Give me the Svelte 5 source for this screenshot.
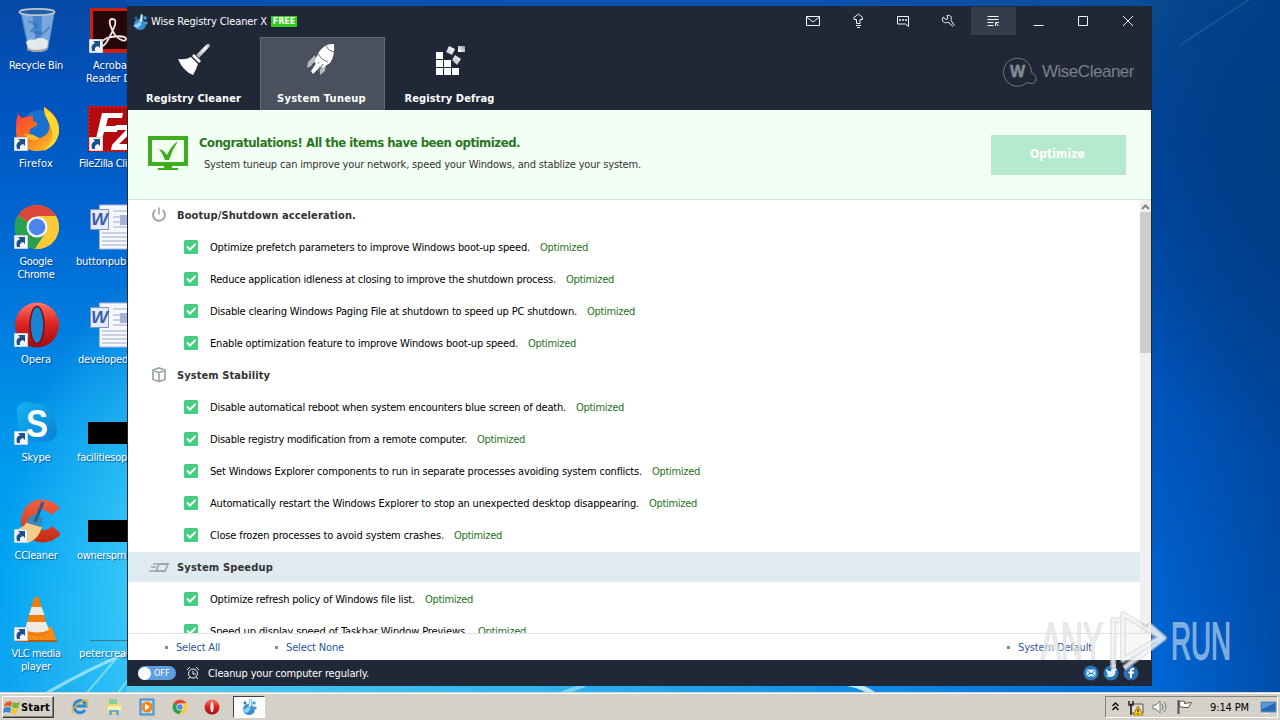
<script lang="ts">
  type Line = { text: string; width: number; indent?: number };
  type Shortcut = { icon: string; x: number; y: number; arrow: boolean; lines: Line[] };

  const shortcuts: Shortcut[] = [
    { icon: "bin", x: 0, y: 7, arrow: false, lines: [{ text: "Recycle Bin", width: 54 }] },
    { icon: "firefox", x: 0, y: 105, arrow: true, lines: [{ text: "Firefox", width: 34 }] },
    { icon: "chrome", x: 0, y: 203, arrow: true, lines: [{ text: "Google", width: 33 }, { text: "Chrome", width: 37 }] },
    { icon: "opera", x: 0, y: 301, arrow: true, lines: [{ text: "Opera", width: 30 }] },
    { icon: "skype", x: 0, y: 399, arrow: true, lines: [{ text: "Skype", width: 29 }] },
    { icon: "ccleaner", x: 0, y: 497, arrow: true, lines: [{ text: "CCleaner", width: 43 }] },
    { icon: "vlc", x: 0, y: 595, arrow: true, lines: [{ text: "VLC media", width: 49 }, { text: "player", width: 30 }] },
    { icon: "acrobat", x: 75, y: 7, arrow: true, lines: [{ text: "Acroba", width: 34, indent: 18 }, { text: "Reader D", width: 45, indent: 11 }] },
    { icon: "filezilla", x: 75, y: 105, arrow: true, lines: [{ text: "FileZilla Cli", width: 48, indent: 4 }] },
    { icon: "word", x: 75, y: 203, arrow: false, lines: [{ text: "buttonpub", width: 50, indent: 1 }] },
    { icon: "word", x: 75, y: 301, arrow: false, lines: [{ text: "developed", width: 50, indent: 3 }] },
    { icon: "black", x: 75, y: 399, arrow: false, lines: [{ text: "facilitiesop", width: 50, indent: 2 }] },
    { icon: "black", x: 75, y: 497, arrow: false, lines: [{ text: "ownerspm", width: 49, indent: 2 }] },
    { icon: "line", x: 75, y: 595, arrow: false, lines: [{ text: "petercrea", width: 47, indent: 4 }] },
  ];

  const tabs = [
    { name: "Registry Cleaner", icon: "broom", width: 95 },
    { name: "System Tuneup", icon: "rocket", width: 89 },
    { name: "Registry Defrag", icon: "blocks", width: 90 },
  ];
  let activeTab = $state("System Tuneup");

  const titleButtons = ["mail", "upgrade", "chat", "wrench", "menu", "minimize", "maximize", "close"];

  const sections = [
    {
      title: "Bootup/Shutdown acceleration.",
      width: 179,
      icon: "power",
      hover: false,
      items: [
        { text: "Optimize prefetch parameters to improve Windows boot-up speed.", width: 320 },
        { text: "Reduce application idleness at closing to improve the shutdown process.", width: 346 },
        { text: "Disable clearing Windows Paging File at shutdown to speed up PC shutdown.", width: 367 },
        { text: "Enable optimization feature to improve Windows boot-up speed.", width: 308 },
      ],
    },
    {
      title: "System Stability",
      width: 93,
      icon: "cube",
      hover: false,
      items: [
        { text: "Disable automatical reboot when system encounters blue screen of death.", width: 356 },
        { text: "Disable registry modification from a remote computer.", width: 257 },
        { text: "Set Windows Explorer components to run in separate processes avoiding system conflicts.", width: 432 },
        { text: "Automatically restart the Windows Explorer to stop an unexpected desktop disappearing.", width: 429 },
        { text: "Close frozen processes to avoid system crashes.", width: 234 },
      ],
    },
    {
      title: "System Speedup",
      width: 96,
      icon: "speed",
      hover: true,
      items: [
        { text: "Optimize refresh policy of Windows file list.", width: 205 },
        { text: "Speed up display speed of Taskbar Window Previews.", width: 258 },
      ],
    },
  ];

  // Spreads the letters so that a label takes exactly the given width
  function fit(node: HTMLElement, width: number) {
    const natural = node.getBoundingClientRect().width;
    const count = (node.textContent ?? "").length;
    node.style.letterSpacing = (width - natural) / count + "px";
  }
</script>

{#snippet chromeLogo()}
  <circle cx="24" cy="24" r="22" fill="#fbc833" />
  <path d="M24 24L4.9 13A22 22 0 0 1 43.1 13z" fill="#dc4638" />
  <path d="M4.9 13A22 22 0 0 0 22 46L33 29 24 24z" fill="#27a052" />
  <path d="M24 13H43A22 22 0 0 1 22 46L33 29z" fill="#fcca39" />
  <circle cx="24" cy="24" r="10.5" fill="#f4f4f4" />
  <circle cx="24" cy="24" r="8.3" fill="#4c86ec" />
{/snippet}

{#snippet operaLogo()}
  <ellipse cx="25" cy="24" rx="22" ry="22.5" fill="url(#operaRed)" />
  <ellipse cx="25" cy="24" rx="7" ry="18.5" fill="#1585d4" stroke="#7b0d0d" stroke-width="1.5" />
{/snippet}

{#snippet cleanerLogo()}
  <path d="M4 6c3-2 8-1 9 3 2 4-1 7-5 7-5 0-8-6-4-10z" fill="#398fce" />
  <path d="M9 0l2 1-1 7-3 1z" fill="#e7f5ff" stroke="#438fca" stroke-width=".6" />
  <path d="M1 12l6-4 3 2-4 4z" fill="#8fd2ff" />
  <circle cx="13" cy="4" r="1.800" fill="#47a8e4" />
  <circle cx="4" cy="4" r="1.400" fill="#2b77b7" />
  <circle cx="14" cy="9" r="1.700" fill="#4f9fd6" />
{/snippet}

{#snippet desktopIcon(name: string)}
  {#if name === "bin"}
    <path d="M8 4h35l-7 38c-2 4-18 4-20 0z" fill="#7ab0e5" fill-opacity=".55" />
    <path d="M10 7l7 34c2 3 5 4 8 4L20 7zM30 7l-1 37 7-3 6-34z" fill="#c8e2f7" fill-opacity=".4" />
    <path d="M14 35q4-4 8-2 7-5 14 1l-1 8c-4 4-16 4-19 0z" fill="#f1f0ee" fill-opacity=".92" />
    <path d="M16 14l9 4-6 6 11 3 8-7" fill="none" stroke="#225fa8" stroke-width="2" opacity=".45" />
    <ellipse cx="25" cy="5" rx="17.5" ry="3.2" fill="#1c5fae" stroke="#c0c7cb" stroke-width="1.8" />
    <path d="M15 42q10 4 20 0" fill="none" stroke="#9ba29e" stroke-width="2" />
  {:else if name === "firefox"}
    <circle cx="27" cy="22" r="17" fill="#1772cf" />
    <path d="M32 2c8 4 16 13 15 24-1 13-11 20-22 20C12 46 4 37 4 26c0-7 0-12 2-17l4 4c4-2 8-1 11-3v6c4 1 5 3 3 5l-6 3c-2 6 3 10 9 9 7-1 12-7 10-15-2-6-6-8-5-16z" fill="url(#fox)" />
    <path d="M32 2c7 5 15 12 15 23 0 10-7 18-16 21 8-6 11-14 8-23-2-7-7-12-7-21z" fill="#fed72f" />
    <path d="M12 28c4 3 8 0 11 3l4 2c-4 5-12 2-15-5z" fill="#ffbd28" />
  {:else if name === "chrome"}
    <g transform="translate(1 0)">{@render chromeLogo()}</g>
  {:else if name === "opera"}
    {@render operaLogo()}
  {:else if name === "skype"}
    <path d="M5 15C3 5 13 0 21 5c13-3 24 8 22 20 6 9-2 20-13 17C17 45 5 37 6 24z" fill="url(#skypeBlue)" />
    <text x="14" y="38" font-family="Liberation Sans, sans-serif" font-size="38" font-weight="bold" fill="#fff" textLength="22" lengthAdjust="spacingAndGlyphs">S</text>
  {:else if name === "ccleaner"}
    <path d="M48 11C38 0 22 0 14 10 5 22 9 37 20 43c10 5 22 2 29-6l-9-8c-5 6-14 5-17-1-3-7 0-14 7-15 4 0 7 2 9 5z" fill="url(#ccRed)" />
    <path d="M15 25l15 5c-3 10-9 15-16 16L3 33q8-2 12-8z" fill="#f7cb88" />
    <path d="M17 20q8-4 14 1l-2 9-14-4z" fill="#3987bd" />
    <path d="M31 5l-8 20" stroke="#225f8c" stroke-width="3" />
  {:else if name === "vlc"}
    <path d="M10 32h30l5 15H5z" fill="#f38b18" />
    <path d="M22 3q3-2 5 0l10 35q-13 6-25 0z" fill="#ef7c0b" />
    <path d="M19.500 12h10l3 8H17zM15 27h19l3 8q-12 5-24 0z" fill="#eee9e5" />
    <path d="M5 46h40" stroke="#b65e0e" stroke-width="2" />
  {:else if name === "acrobat"}
    <path fill="#ce1e12" d="M3 1h43v45H3z" />
    <path fill="#25070a" d="M6 4h40v38H6z" />
    <path d="M25 12c-5 0-1 10 3 16 5 6 11 7 11 4 0-4-13-3-19-1-6 3-8 7-6 8 4 2 11-13 14-21 1-5 0-6-3-6z" fill="none" stroke="#f5e9e8" stroke-width="1.8" />
  {:else if name === "filezilla"}
    <path fill="#b30b0d" d="M1 1h47v46H1z" />
    <path fill="none" stroke="#cf4145" stroke-dasharray="2 2" d="M2 2h46v44H2z" />
    <path d="M15 8h21l-1 5H21l-2 8h12l-1 6H17l-4 15H7zM29 20h19l-1 5-15 14h14v6H24l1-5 14-15H28z" fill="#fff" />
  {:else if name === "word"}
    <path fill="#f6f7fd" stroke="#a7b5db" d="M12.500 2h36v44h-36z" />
    <path d="M26 8h22M26 14h7M26 19h7M15 30h33M15 34h33M15 38h33M15 42h33M26 24h22" stroke="#9eabc8" stroke-width="1" />
    <path fill="#a3b3d6" d="M33 12h8v10h-8z" />
    <path fill="#e5ebf8" stroke="#8390c1" d="M3.500 6.500h18v20h-18z" />
    <text x="4" y="22" font-family="Liberation Sans, sans-serif" font-size="16" font-style="italic" font-weight="bold" fill="#365fb2" textLength="17" lengthAdjust="spacingAndGlyphs">W</text>
  {:else if name === "black"}
    <path fill="#000" d="M1 23h47v22H1z" />
  {:else}
    <path stroke="#397a94" d="M3 45.500h45" />
  {/if}
{/snippet}

{#snippet titleIcon(name: string)}
  {#if name === "mail"}
    <path d="M1.500 3.500h13v9h-13zM1.500 4l6.500 5 6.500-5" />
  {:else if name === "upgrade"}
    <path d="M6.500 10.500V6.500H4v-2l4.500-3.500 4 3.500v2h-2.500v4zM6 12.500h5M7 14.500h3" />
  {:else if name === "chat"}
    <path d="M2.500 3.500h11v10l-3-2.500h-8z" /><path d="M4 7h2M7 7h2M10 7h2" stroke-width="1.500" />
  {:else if name === "wrench"}
    <path d="M3 4l3 2.500 2-1-1-3c4-1 5 2 4 5l3.500 5M3 4c-2 5 2 7 5 5l5 4.500" />
  {:else if name === "menu"}
    <path d="M2.500 3.500h11M2.500 6.500h11M2.500 9.500h6M2.500 12.500h6M10.500 13V9.500H14M10.500 9.500l3 3.500" />
  {:else if name === "minimize"}
    <path d="M3.500 12.500h10" />
  {:else if name === "maximize"}
    <path d="M3.500 3.500h9v9h-9z" />
  {:else}
    <path d="M3 3l10 10M13 3L3 13" />
  {/if}
{/snippet}

{#snippet tabIcon(name: string)}
  {#if name === "broom"}
    <path d="M20 13L31 2q3-1 3 2L23 16z" fill="url(#handle)" />
    <path d="M18 12l7 7-2 2-7-7z" fill="#fff" />
    <path d="M15 15l7 7q-2 6-5 11Q7 29 2 17q8 1 13-2z" fill="#fff" />
  {:else if name === "rocket"}
    <path d="M11 13L4 20l-1 6 4-2 5-7zM22 23l-1 6-5 4v-5l3-7z" fill="#b6bbc1" />
    <path d="M30 2q-9-1-15 8l-5 10 8 6 8-5Q31 14 30 2z" fill="#fff" />
    <path d="M22 4q2 5 8 6M14 12q3 6 10 8M15 20l-7 10M19 22l-5 8" fill="none" stroke="#69717d" />
    <path d="M13 20l-6 9 2 3 7-7z" fill="#fff" />
  {:else}
    <path d="M4 10h7v7H4zM4 18h7v7H4zM4 26h7v7H4zM12 18h7v7h-7zM12 26h7v7h-7zM20 26h7v7h-7z" fill="#fff" />
    <path d="M17 4l6 3-3 6-6-3zM26 4h7v6h-7zM23 13l6 4-4 6-5-5z" fill="url(#handle)" />
  {/if}
{/snippet}

{#snippet sectionIcon(name: string)}
  {#if name === "power"}
    <path d="M5.500 4a6 6 0 1 0 7 0" stroke-width="2" /><path d="M9 1.500v7" stroke-width="1.600" />
  {:else if name === "cube"}
    <path d="M3 4l6-2 6 2v9.500l-6 2-6-2zM3 4.500l6 2 6-2M9 6.500v8" stroke-width="1.700" />
  {:else}
    <path d="M9 6h9l-3 7H6z" stroke-width="1.800" /><path d="M3 6h5M1 9h5M-1 13h6" stroke-width="1.500" />
  {/if}
{/snippet}

<svg class="defs" aria-hidden="true">
  <defs>
    <linearGradient id="operaRed" x2="0" y2="1"><stop stop-color="#ff7769" /><stop offset=".45" stop-color="#df2622" /><stop offset="1" stop-color="#9e0c10" /></linearGradient>
    <linearGradient id="fox" x2=".8" y2="1"><stop stop-color="#fa354a" /><stop offset=".5" stop-color="#fb6b1c" /><stop offset="1" stop-color="#ffc32a" /></linearGradient>
    <linearGradient id="skypeBlue" x2="1" y2="1"><stop stop-color="#13b4f2" /><stop offset="1" stop-color="#097fd2" /></linearGradient>
    <linearGradient id="ccRed" x2="0" y2="1"><stop stop-color="#f36040" /><stop offset="1" stop-color="#c52b18" /></linearGradient>
    <linearGradient id="handle" x1="1" y1="0" x2="0" y2="1"><stop stop-color="#888e99" /><stop offset=".3" stop-color="#fff" /><stop offset="1" stop-color="#949aa4" /></linearGradient>
  </defs>
</svg>

<div class="desktop">
  <svg class="rays" width="1280" height="692">
    <path d="M45 694Q90 668 130 652" stroke="#c8f6ff" stroke-width="3" opacity=".65" fill="none" />
    <path d="M85 695L115 660M117 694L130 677" stroke="#a8f2e5" stroke-width="2" opacity=".6" />
    <path d="M560 694l25-9" stroke="#a6e9ff" stroke-width="4" opacity=".6" />
    <path d="M845 683q18 3 30 12" stroke="#eaffff" stroke-width="5" fill="none" opacity=".8" />
    <path d="M1180 45L1250-1" stroke="#5ca6cf" stroke-width="2" opacity=".2" />
  </svg>

  {#each shortcuts as shortcut}
    <div class="shortcut" class:cut={shortcut.x > 0} style="left: {shortcut.x}px; top: {shortcut.y}px">
      <svg width="48" height="48">
        {@render desktopIcon(shortcut.icon)}
        {#if shortcut.arrow}
          <path d="M2.500 32.500h13v13h-13z" fill="#f5f6f7" stroke="#c2d3df" />
          <path d="M5 44q-2-6 3-8l-2-2h7v7l-2-2q-4 1-3 5z" fill="#1e508e" />
        {/if}
      </svg>
      {#each shortcut.lines as line}
        <div class="label" style="padding-left: {line.indent ?? 0}px"><span use:fit={line.width}>{line.text}</span></div>
      {/each}
    </div>
  {/each}

  <div class="window">
    <header class="titlebar">
      <svg class="app-icon" width="16" height="16">{@render cleanerLogo()}</svg>
      <span class="app-name" use:fit={116}>Wise Registry Cleaner X</span>
      <span class="badge">FREE</span>
      <div class="title-buttons">
        {#each titleButtons as name}
          <button class:pressed={name === "menu"} aria-label={name}>
            <svg width="16" height="16" class="stroke">{@render titleIcon(name)}</svg>
          </button>
        {/each}
      </div>
    </header>

    <nav>
      {#each tabs as tab}
        <button class="tab" class:active={activeTab === tab.name} onclick={() => (activeTab = tab.name)}>
          <svg width="36" height="36">{@render tabIcon(tab.icon)}</svg>
          <span use:fit={tab.width}>{tab.name}</span>
        </button>
      {/each}
      <div class="brand">
        <svg width="36" height="32">
          <path d="M29.500 16.500A14 14 0 1 0 25 26.500q7 3 9-2 1-5-4.500-8" fill="none" stroke="#747985" />
          <text x="8" y="21" font-family="Liberation Sans, sans-serif" font-size="16" font-weight="bold" fill="#858a94" stroke="#858a94" stroke-width=".5">W</text>
        </svg>
        <span use:fit={92}>WiseCleaner</span>
      </div>
    </nav>

    <section class="banner">
      <svg width="40" height="38">
        <path d="M2 3h36v26H2z" fill="#f2fff0" stroke="#3fae1c" stroke-width="4" />
        <path d="M16 30h8v3h6v2H10v-2h6z" fill="#3fae1c" />
        <path d="M11 14q5 1 8 6 4-9 11-14-6 9-9 19h-4q-2-6-6-11z" fill="#3fae1c" />
      </svg>
      <div class="message">
        <h1><span use:fit={321}>Congratulations! All the items have been optimized.</span></h1>
        <p><span use:fit={437}>System tuneup can improve your network, speed your Windows, and stablize your system.</span></p>
      </div>
      <button class="optimize"><span use:fit={55}>Optimize</span></button>
    </section>

    <div class="content">
      <div class="list">
        {#each sections as section}
          <div class="row heading" class:hover={section.hover}>
            <svg width="18" height="18">{@render sectionIcon(section.icon)}</svg>
            <span use:fit={section.width}>{section.title}</span>
          </div>
          {#each section.items as item}
            <div class="row item">
              <svg width="14" height="14">
                <rect width="14" height="14" rx="1.500" fill="#43cd80" />
                <path d="M3 6.500l3 3 5.500-5.500" fill="none" stroke="#fff" stroke-width="2" />
              </svg>
              <span class="text" use:fit={item.width}>{item.text}</span>
              <span class="status" use:fit={48}>Optimized</span>
            </div>
          {/each}
        {/each}
      </div>
      <div class="scrollbar">
        <svg width="11" height="12"><path d="M2 9l3.500-3.500L9 9" /></svg>
        <div class="thumb"></div>
        <svg class="down" width="11" height="12"><path d="M2 3l3.500 3.500L9 3" /></svg>
      </div>
    </div>

    <div class="links">
      <a href="#all"><span use:fit={44}>Select All</span></a>
      <a href="#none"><span use:fit={58}>Select None</span></a>
      <a class="last" href="#default"><span use:fit={74}>System Default</span></a>
    </div>

    <footer>
      <div class="toggle"><i></i><span>OFF</span></div>
      <svg class="stroke alarm" width="14" height="14">
        <circle cx="7" cy="7.500" r="4.500" /><path d="M7 5v3h3M1 4l3-3M13 4l-3-3M4 11l-2 2M10 11l2 2" />
      </svg>
      <span class="hint" use:fit={161}>Cleanup your computer regularly.</span>
      <div class="social">
        <svg width="16" height="16"><circle cx="8" cy="8" r="7.500" fill="#2877b9" /><path d="M3.500 4.500h9v7h-9z" fill="#d7effb" /><path d="M3.500 5L8 9l4.500-4M3.500 11.500L7 8M12.500 11.500L9 8" fill="none" stroke="#2877b9" /></svg>
        <svg width="16" height="16"><circle cx="8" cy="8" r="7.500" fill="#2877b9" /><path d="M3 4q3 3 5 2 0-3 3-3l3 1-1.500 2q0 6-6 6l-4-1 3-1-2-2 1-.5L3 6z" fill="#e4f6ff" /></svg>
        <svg width="16" height="16"><circle cx="8" cy="8" r="7.500" fill="#2b6fae" /><path d="M8 13V5.500Q8 3.500 11 4M5.500 7.500H11" fill="none" stroke="#fff" stroke-width="2" /></svg>
      </div>
    </footer>
  </div>

  <svg class="watermark" width="200" height="70">
    <g font-family="Liberation Sans Narrow, Liberation Sans, sans-serif" font-size="51">
      <text x="5" y="53" textLength="62" lengthAdjust="spacingAndGlyphs" fill="#e4e4e4" fill-opacity=".6" stroke="#dcdcdc" stroke-opacity=".6" stroke-width="2">ANY</text>
      <text x="135" y="53" textLength="60" lengthAdjust="spacingAndGlyphs" fill="#8fb8e4" fill-opacity=".85" stroke="#8fb8e4" stroke-opacity=".85" stroke-width="1.800">RUN</text>
    </g>
    <g fill="none" stroke="#d0d4d8" stroke-opacity=".6" stroke-width="6" stroke-linejoin="round">
      <path d="M80 60h-3V14h7M87 50V8l38 23-38 23zM112 18l16 14-40 30" fill="#e6e6e6" fill-opacity=".3" />
      <path d="M80 60h-3V14h7M87 50V8l38 23-38 23zM112 18l16 14-40 30" stroke="#fff" stroke-opacity=".6" stroke-width="3" />
    </g>
  </svg>

  <div class="taskbar">
    <button class="start">
      <svg width="18" height="18">
        <path d="M2 5q4-3 7-1L8 9Q5 7 1 9z" fill="#e75b26" /><path d="M10 4q4 2 7 0l-2 6q-3 1-6-1z" fill="#74b72b" />
        <path d="M1 10q4-2 7 0l-1 5q-3-2-7 0z" fill="#3b86cf" /><path d="M9 10q3 2 6 1l-2 5q-2 1-5-1z" fill="#f6c52c" />
      </svg>
      <span use:fit={29}>Start</span>
    </button>
    <div class="quick">
      <svg width="18" height="18"><path d="M14 12a6 6 0 1 1 1-4H5" fill="none" stroke="#2c87d3" stroke-width="3" /><path d="M2 15Q-1 12 7 6t9-3q2 2-1 5" fill="none" stroke="#e9b52f" stroke-width="1.500" /></svg>
      <svg width="18" height="18"><path d="M2 3h5l1 2h8v11H2z" fill="#efd779" /><path d="M4 1h8v5H4z" fill="#86cda2" /><path d="M3 8h13v5H3z" fill="#fbefae" /><path d="M4 17v-5h10v5h-3v-3H7v3z" fill="#61afe1" /></svg>
      <svg width="18" height="18"><path d="M2 1h14v16H2z" fill="#6db1e5" stroke="#3d83be" /><path d="M4 3h10v12H4z" fill="#c8e2ef" /><circle cx="9" cy="9" r="5.500" fill="#ef8419" /><path d="M7 5.500l5 3.500-5 3.500z" fill="#fff" /></svg>
      <svg width="16" height="16" viewBox="0 0 48 48">{@render chromeLogo()}</svg>
      <svg width="18" height="18" viewBox="0 0 48 48"><ellipse cx="24" cy="24" rx="20" ry="20" fill="url(#operaRed)" /><ellipse cx="24" cy="24" rx="4.500" ry="14" fill="#e9dedd" /></svg>
    </div>
    <div class="task"><svg width="17" height="17">{@render cleanerLogo()}</svg></div>
    <div class="tray">
      <svg width="9" height="14"><path d="M1.500 6l3-3 3 3M1.500 10l3-3 3 3" fill="none" stroke="#000" stroke-width="1.300" /></svg>
      <svg width="17" height="17"><path d="M4 5h12v9H4z" fill="#ddd" stroke="#555" /><path d="M2 2v4h4V2M4 6v10" fill="none" stroke="#222" stroke-width="1.500" /><path d="M11 7l5 9H6z" fill="#f6cf15" stroke="#a58207" /><path d="M11 10v3M11 14v1" stroke="#000" /></svg>
      <svg width="18" height="16"><path d="M2 6h3l4-4v12l-4-4H2z" fill="#fff" stroke="#777" /><path d="M11 5q2 3 0 6M13 3q4 5 0 10" fill="none" stroke="#777" /></svg>
      <svg width="17" height="16"><path d="M2.500 1v14" stroke="#555" stroke-width="2" /><path d="M3.500 2.500q3-1 5 0v2l7-1-3 5H8l-4.500-1z" fill="#fff" stroke="#555" /></svg>
      <span use:fit={39}>9:14 PM</span>
      <svg width="17" height="15"><path d="M1 2h15v10H1z" fill="#2466b6" stroke="#7794ba" /><path d="M2 3h13L2 9z" fill="#5798dd" /><path d="M2 13.500h7" stroke="#e9f1f8" /></svg>
    </div>
  </div>
</div>

<style>
  :global(body) {
    overflow: hidden;
  }

  .desktop {
    position: relative;
    width: 1280px;
    height: 720px;
    overflow: hidden;
    font: 11px "DejaVu Sans Condensed", "DejaVu Sans", sans-serif;
    background:
      linear-gradient(90deg, #4fcdf0 0%, #2fb5ee 40%, #0e8ce8 72%, #0069da 100%) 127px 100% / 1025px 34px no-repeat,
      radial-gradient(ellipse 190px 330px at 190px 590px, #5cdcfa 0%, rgba(61, 205, 248, 0.8) 35%, rgba(15, 165, 242, 0) 100%) 0 0 / 640px 100% no-repeat,
      linear-gradient(180deg, #0849a6 0%, #0054bf 14%, #0065d0 30%, #007ee0 46%, #0096ec 60%, #02a4f3 80%, #12a4f0 100%) 0 0 / 127px 100% no-repeat,
      radial-gradient(ellipse 190px 320px at 1290px 140px, #003c80 0%, rgba(0, 62, 136, 0) 100%),
      linear-gradient(90deg, rgba(0, 60, 140, 0) 0%, rgba(0, 60, 140, 0.6) 100%) 100% 0 / 128px 100% no-repeat,
      linear-gradient(180deg, #0a4c92 0%, #00459e 20%, #0052b8 50%, #0062ce 80%, #0069da 100%) 100% 0 / 128px 100% no-repeat,
      linear-gradient(90deg, #0850b2 0%, #0c52b4 60%, #0a4c92 100%);
  }

  svg {
    display: block;
    flex: none;
  }

  .defs {
    position: absolute;
    width: 0;
    height: 0;
  }

  .rays {
    position: absolute;
    left: 0;
    top: 0;
  }

  button {
    padding: 0;
    border: 0;
    background: none;
    color: inherit;
    font: inherit;
  }

  span {
    display: inline-block;
    white-space: nowrap;
  }

  .stroke {
    fill: none;
    stroke: #f3f5f7;
  }

  .shortcut {
    position: absolute;
    width: 72px;
    color: #fff;
    text-align: center;
  }

  .shortcut > svg {
    margin: 0 0 4px 12px;
  }

  .cut {
    text-align: left;
  }

  .label {
    height: 13px;
    line-height: 13px;
    text-shadow: 1px 1px 1px rgba(0, 30, 80, 0.6);
  }

  .window {
    position: absolute;
    left: 127px;
    top: 6px;
    box-sizing: border-box;
    width: 1025px;
    height: 680px;
    border: 1px solid #202736;
    display: flex;
    flex-direction: column;
    background: #fff;
  }

  .titlebar {
    display: flex;
    height: 30px;
    padding-left: 4px;
    background: #202736;
    color: #fff;
  }

  .app-icon {
    margin: 7px 3px 0 0;
  }

  .app-name {
    height: 30px;
    line-height: 30px;
  }

  .badge {
    width: 26px;
    height: 11px;
    margin: 9px 0 0 4px;
    background: #36ca22;
    font: bold 8px/11px "DejaVu Sans", sans-serif;
    text-align: center;
  }

  .title-buttons {
    display: flex;
    margin-left: auto;
  }

  .title-buttons button {
    box-sizing: border-box;
    width: 45px;
    height: 28px;
    padding-right: 2px;
    display: flex;
    align-items: center;
    justify-content: center;
  }

  .title-buttons .pressed {
    background: #363d4a;
  }

  nav {
    display: flex;
    gap: 3px;
    height: 73px;
    padding-left: 4px;
    background: #202736;
  }

  .tab {
    box-sizing: border-box;
    width: 125px;
    border: 1px solid transparent;
    border-bottom: 0;
    display: flex;
    flex-direction: column;
    align-items: center;
    padding: 4px 2px 0 0;
    color: #fff;
    font-weight: bold;
  }

  .tab svg {
    margin-bottom: 14px;
  }

  .tab.active {
    background: #4b515c;
    border-color: #636974;
  }

  .brand {
    display: flex;
    align-items: center;
    margin: 0 17px 4px auto;
    color: #7b808b;
    font: 17px "Liberation Sans", sans-serif;
  }

  .brand svg {
    margin-right: 4px;
  }

  .banner {
    box-sizing: border-box;
    height: 90px;
    border-bottom: 1px solid #ccebd6;
    display: flex;
    padding: 25px 25px 0 20px;
    background: #f2fff4;
  }

  .message {
    margin-left: 11px;
  }

  h1 {
    margin: 0;
    color: #2c761e;
    font-size: 13px;
    line-height: 16px;
  }

  p {
    margin: 6px 0 0 5px;
    color: #333;
    line-height: 16px;
  }

  .optimize {
    width: 135px;
    height: 40px;
    margin-left: auto;
    padding: 0 2px 2px 0;
    background: #b7e9cf;
    color: #fff;
    font-size: 12px;
    font-weight: bold;
  }

  .content {
    height: 433px;
    display: flex;
    overflow: hidden;
  }

  .list {
    flex: 1;
    display: flex;
    flex-direction: column;
    gap: 2px;
    overflow: hidden;
  }

  .row {
    flex: none;
    height: 30px;
    display: flex;
    align-items: center;
    color: #000;
  }

  .heading {
    padding-left: 22px;
    color: #333;
    font-weight: bold;
  }

  .heading svg {
    margin-right: 9px;
    fill: none;
    stroke: #9da5ad;
    overflow: visible;
  }

  .hover {
    background: #e0eaf1;
  }

  .item {
    padding-left: 56px;
  }

  .text {
    margin-left: 12px;
  }

  .status {
    margin-left: 10px;
    color: #28731d;
  }

  .scrollbar {
    width: 11px;
    display: flex;
    flex-direction: column;
    background: #f0f0f0;
  }

  .scrollbar svg {
    fill: none;
    stroke: #858585;
    stroke-width: 2;
  }

  .thumb {
    height: 141px;
    background: #cdcdcd;
  }

  .down {
    margin-top: auto;
  }

  .links {
    box-sizing: border-box;
    height: 27px;
    border-top: 1px solid #dfe2e5;
    display: flex;
    align-items: center;
    padding: 0 59px 0 37px;
  }

  .links a {
    display: flex;
    align-items: center;
    margin-right: 55px;
    color: #2b5797;
    text-decoration: none;
  }

  .links a::before {
    content: "";
    width: 3px;
    height: 3px;
    margin-right: 8px;
    background: #7c8c98;
  }

  .links .last {
    margin: 0 0 0 auto;
  }

  footer {
    box-sizing: border-box;
    height: 25px;
    display: flex;
    align-items: center;
    padding: 1px 12px 0 10px;
    background: #202736;
    color: #fff;
  }

  .toggle {
    width: 38px;
    height: 14px;
    border-radius: 7px;
    display: flex;
    align-items: center;
    background: #5d9ee2;
    font-size: 9px;
  }

  .toggle i {
    width: 13px;
    height: 13px;
    margin-right: 3px;
    border-radius: 50%;
    background: #fff;
  }

  .alarm {
    margin: 0 8px 0 10px;
  }

  .hint {
    padding-top: 1px;
  }

  .social {
    display: flex;
    gap: 4px;
    margin-left: auto;
  }

  .watermark {
    position: absolute;
    left: 1036px;
    top: 606px;
  }

  .taskbar {
    position: absolute;
    left: 0;
    bottom: 0;
    box-sizing: border-box;
    width: 1280px;
    height: 28px;
    border-top: 1px solid #d6d2ca;
    box-shadow: inset 0 1px #fff;
    display: flex;
    align-items: center;
    padding: 1px 2px 0;
    background: #d5d0c8;
    color: #000;
  }

  .start {
    box-sizing: border-box;
    width: 52px;
    height: 22px;
    border: 1px solid;
    border-color: #fff #404040 #404040 #fff;
    box-shadow: inset -1px -1px #86827c;
    display: flex;
    align-items: center;
    font-weight: bold;
  }

  .quick {
    display: flex;
    align-items: center;
    gap: 15.6px;
    margin-left: 17px;
  }

  .task {
    box-sizing: border-box;
    width: 32px;
    height: 22px;
    margin-left: 12px;
    border: 1px solid;
    border-color: #404040 #fff #fff #404040;
    display: flex;
    align-items: center;
    justify-content: center;
    background: #fbfbfa;
  }

  .tray {
    box-sizing: border-box;
    width: 173px;
    height: 22px;
    margin-left: auto;
    border: 1px solid;
    border-color: #86827c #fff #fff #86827c;
    display: flex;
    align-items: center;
    gap: 7px;
    padding-left: 5px;
  }

  .tray span {
    margin: 0 4px 0 10px;
  }
</style>
